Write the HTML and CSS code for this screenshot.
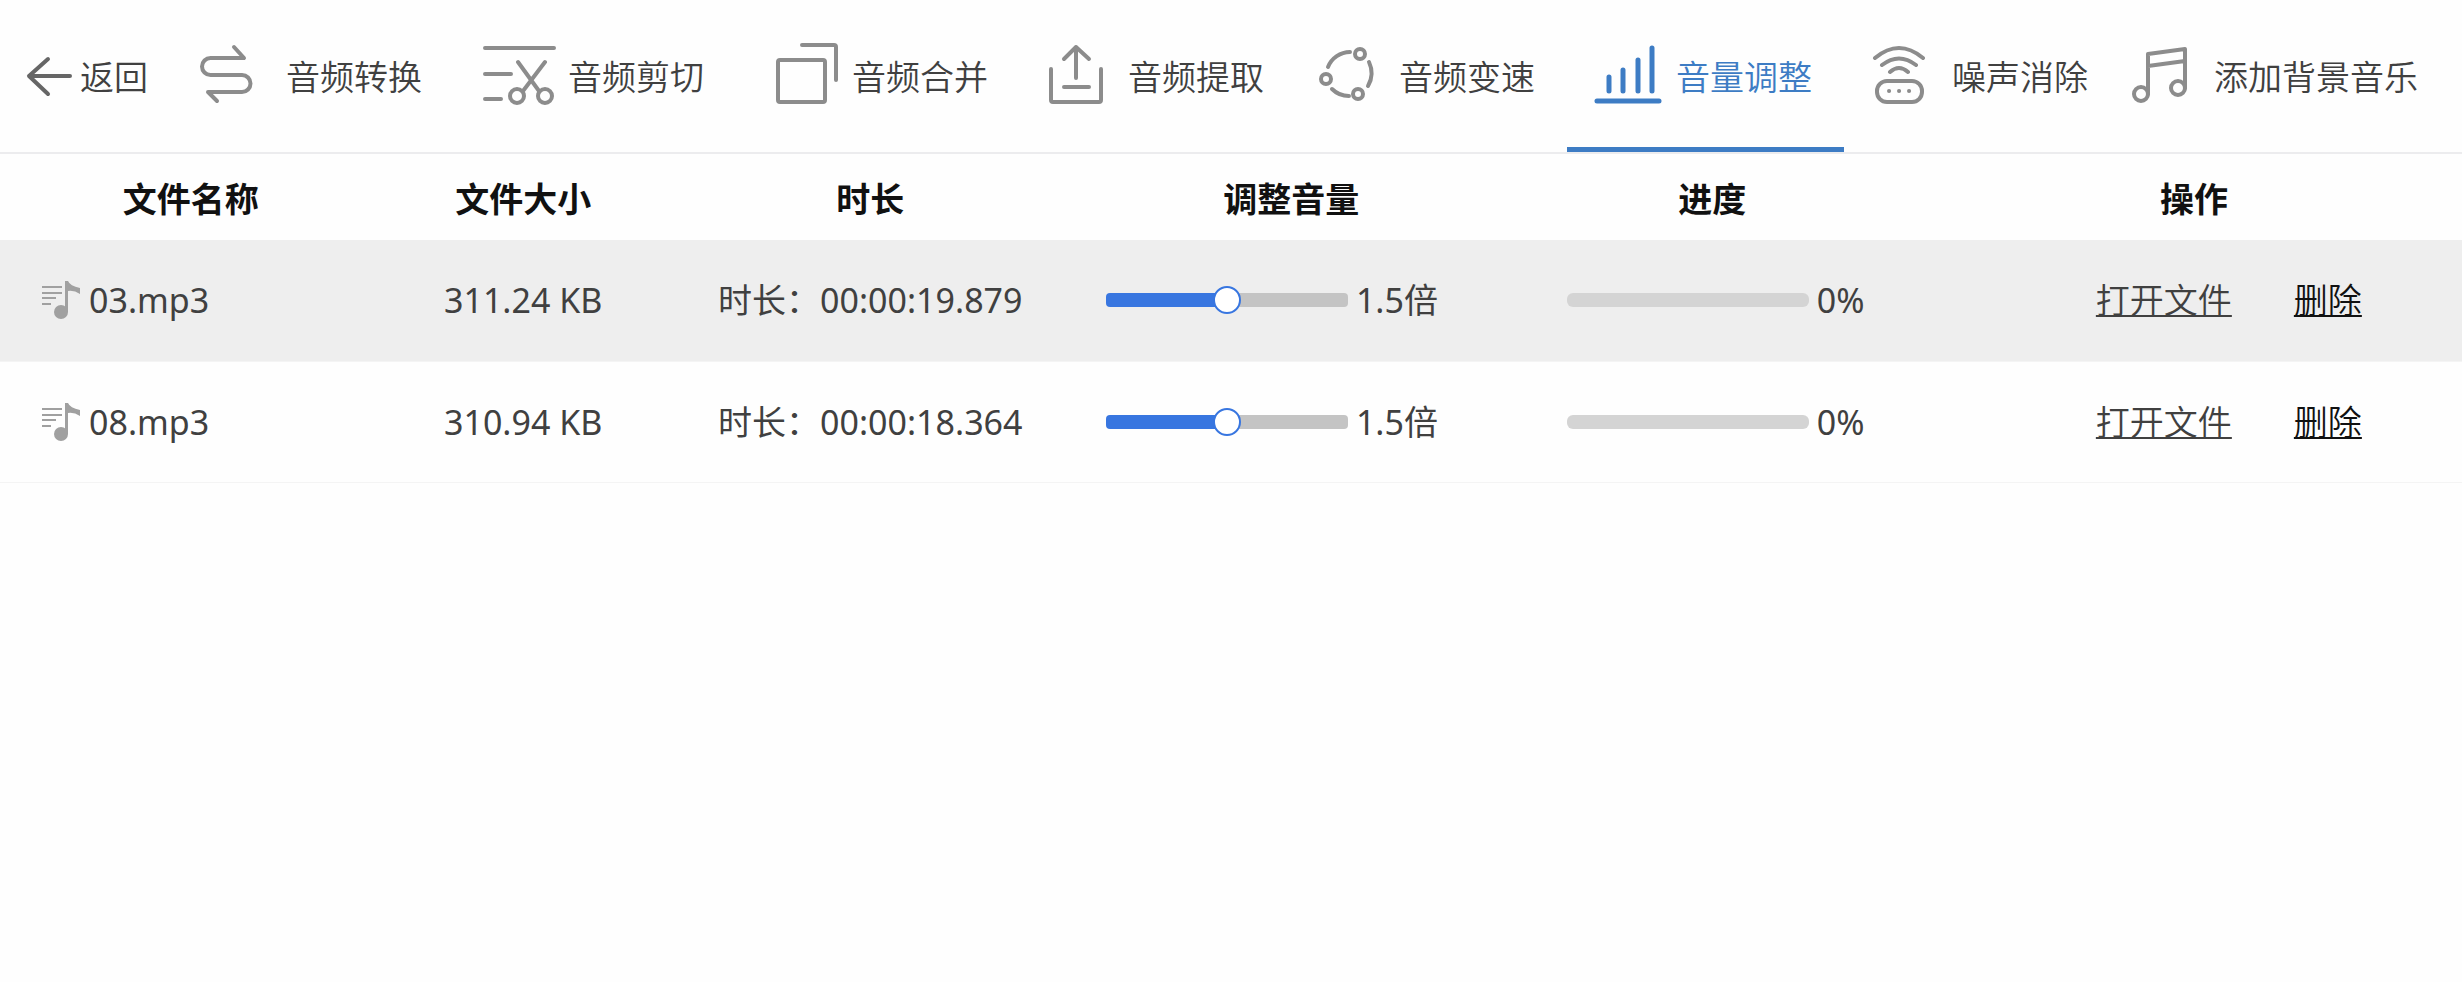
FILE: index.html
```html
<!DOCTYPE html>
<html lang="zh-CN">
<head>
  <meta charset="UTF-8">
  <meta name="viewport" content="width=device-width, initial-scale=1.0">
  <title>音量调整</title>
  <link rel="stylesheet" href="styles.css">
</head>
<body>
  <!-- Toolbar -->
  <nav class="toolbar">
    <a href="#" class="back">
      <svg class="icon" width="56" height="72" viewBox="0 0 56 72">
        <path d="M5 36H46M24 19L5 36L24 54"/>
      </svg>
      返回
    </a>
    <a href="#" class="tab">
      <svg class="icon" width="98" height="72" viewBox="-8 0 98 72">
        <path d="M38 7L48 18H14.500a8.500 8.500 0 0 0 0 17H46a8.500 8.500 0 0 1 0 17H12L21 61"/>
      </svg>
      音频转换
    </a>
    <a href="#" class="tab">
      <svg class="icon" width="106" height="72" viewBox="-8 0 106 72">
        <path d="M15 8H84M15 34H41M15 59H31M48 22L69 51M75 22L53 51"/>
        <circle cx="47" cy="56" r="7"/>
        <circle cx="75" cy="56" r="7"/>
      </svg>
      音频剪切
    </a>
    <a href="#" class="tab">
      <svg class="icon" width="108" height="72" viewBox="-8 0 108 72">
        <rect x="26" y="20" width="47" height="42" rx="2"/>
        <path d="M50 5H82a2 2 0 0 1 2 2V40"/>
      </svg>
      音频合并
    </a>
    <a href="#" class="tab">
      <svg class="icon" width="100" height="72" viewBox="-8 0 100 72">
        <path d="M15 29V60a2 2 0 0 0 2 2H63a2 2 0 0 0 2-2V29M40 38V7M28 19L40 7L53 19M28 47H53"/>
      </svg>
      音频提取
    </a>
    <a href="#" class="tab">
      <svg class="icon" width="95" height="72" viewBox="-8 0 95 72">
        <circle cx="48" cy="14" r="5"/>
        <circle cx="14" cy="39" r="5"/>
        <circle cx="46" cy="54" r="5"/>
        <path d="M16 27A24 24 0 0 1 38 12M20 49A24 24 0 0 0 37 56M57 22A26 26 0 0 1 56 46"/>
      </svg>
      音频变速
    </a>
    <a href="#" class="tab active">
      <svg class="icon" width="101" height="72" viewBox="-8 0 101 72">
        <path d="M26 37V51M40 30V51M55 20V51M69 8V51M14 61H76"/>
      </svg>
      音量调整
    </a>
    <a href="#" class="tab">
      <svg class="icon" width="100" height="72" viewBox="-8 0 100 72">
        <path d="M15 18Q39 -2 63 18M22 25Q39 12 56 25M30 32Q39 24 48 32"/>
        <rect x="17" y="41" width="45" height="21" rx="10"/>
        <path d="M29 51H29.100M39 51H39.100M49 51H49.100"/>
      </svg>
      噪声消除
    </a>
    <a href="#" class="tab">
      <svg class="icon" width="86" height="72" viewBox="-8 0 86 72">
        <circle cx="5" cy="54" r="7"/>
        <circle cx="42" cy="48" r="7"/>
        <path d="M12 54V14L49 9V48M12 26L49 21"/>
      </svg>
      添加背景音乐
    </a>
  </nav>

  <!-- File list -->
  <table class="files">
    <thead>
      <tr>
        <th class="col-name">文件名称</th>
        <th class="col-size">文件大小</th>
        <th class="col-duration">时长</th>
        <th class="col-volume">调整音量</th>
        <th class="col-progress">进度</th>
        <th class="col-actions">操作</th>
      </tr>
    </thead>
    <tbody>
      <tr class="selected">
        <td>
          <div class="cell name">
            <svg class="note" width="40" height="40" viewBox="0 0 40 40">
              <path d="M1 7H21M1 13H21M1 18H15M1 24H10"/>
              <circle cx="20" cy="32" r="7"/>
              <path class="flag" d="M24 1H27Q29 6 39 8V14Q33 10 27 11V32H24Z"/>
            </svg>
            03.mp3
          </div>
        </td>
        <td>311.24 KB</td>
        <td>时长：00:00:19.879</td>
        <td>
          <div class="cell volume">
            <input type="range" id="volume-1" min="0" max="3" step="0.1" value="1.5" style="--fill: 50%">
            <label for="volume-1">1.5倍</label>
          </div>
        </td>
        <td>
          <div class="cell progress">
            <progress id="progress-1" max="100" value="0"></progress>
            <label for="progress-1">0%</label>
          </div>
        </td>
        <td>
          <div class="cell actions">
            <a href="#">打开文件</a>
            <a href="#" class="delete">删除</a>
          </div>
        </td>
      </tr>
      <tr>
        <td>
          <div class="cell name">
            <svg class="note" width="40" height="40" viewBox="0 0 40 40">
              <path d="M1 7H21M1 13H21M1 18H15M1 24H10"/>
              <circle cx="20" cy="32" r="7"/>
              <path class="flag" d="M24 1H27Q29 6 39 8V14Q33 10 27 11V32H24Z"/>
            </svg>
            08.mp3
          </div>
        </td>
        <td>310.94 KB</td>
        <td>时长：00:00:18.364</td>
        <td>
          <div class="cell volume">
            <input type="range" id="volume-2" min="0" max="3" step="0.1" value="1.5" style="--fill: 50%">
            <label for="volume-2">1.5倍</label>
          </div>
        </td>
        <td>
          <div class="cell progress">
            <progress id="progress-2" max="100" value="0"></progress>
            <label for="progress-2">0%</label>
          </div>
        </td>
        <td>
          <div class="cell actions">
            <a href="#">打开文件</a>
            <a href="#" class="delete">删除</a>
          </div>
        </td>
      </tr>
    </tbody>
  </table>

  <script>
    // Keep the label and the filled part in step with the slider
    document.querySelectorAll('.volume input').forEach(function(slider) {
      slider.addEventListener('input', function() {
        slider.style.setProperty('--fill', (slider.value / slider.max * 100) + '%');
        slider.nextElementSibling.textContent = slider.value + '倍';
      });
    });
  </script>
</body>
</html>
```
FILE: styles.css
```css
:root {
  --blue: #3d7cc4;
  --slider-blue: #3876e0;
  --text: #404040;
  --icon: #8c8c8c;
  --line: #ececee;
}

* {
  box-sizing: border-box;
}

body {
  font-family: 'Noto Sans', 'Noto Sans CJK SC', sans-serif;
  font-size: 34px;
  line-height: 48px;
  color: var(--text);
  background-color: #fefefe;
  margin: 0;
}

/* Toolbar */
.toolbar {
  display: flex;
  height: 154px;
  border-bottom: 2px solid var(--line);
  font-family: 'Noto Sans CJK SC', sans-serif;
  font-weight: 350;
  white-space: nowrap;
}

.back,
.tab {
  display: flex;
  flex-shrink: 0;
  align-items: center;
  color: var(--text);
  text-decoration: none;
}

.back {
  padding: 0 32px 0 24px;
}

.tab {
  padding: 0 32px 0 8px;
}

.tab.active {
  color: var(--blue);
  border-bottom: 5px solid var(--blue);
  padding-top: 5px;
}

.icon {
  fill: none;
  stroke: var(--icon);
  stroke-width: 4;
  stroke-linecap: round;
  stroke-linejoin: round;
}

.back .icon {
  stroke: #666;
}

.active .icon {
  stroke: var(--blue);
  stroke-width: 5;
}

/* File list */
.files {
  width: 100%;
  table-layout: fixed;
  border-collapse: collapse;
}

.files th {
  height: 86px;
  padding: 4px 0 0;
  color: #111;
  font-weight: 700;
}

.files td {
  height: 121px;
  padding: 0;
  text-align: center;
}

.files tbody tr {
  border-bottom: 1px solid #f4f4f4;
}

.files .selected {
  background-color: #eee;
}

.col-name { width: 15.5%; }
.col-size { width: 11.5%; }
.col-duration { width: 16.7%; }
.col-volume { width: 17.5%; }
.col-progress { width: 16.7%; }

.files .col-actions {
  padding-left: 8px;
}

.cell {
  display: flex;
  align-items: center;
  gap: 8px;
}

.name { padding-left: 41px; }
.volume { padding-left: 30px; }
.progress { padding-left: 60px; }

.actions {
  gap: 62px;
  padding-left: 178px;
  font-weight: 350;
}

.actions a {
  color: var(--text);
  text-underline-offset: 2px;
  text-decoration-thickness: 2px;
  text-decoration-skip-ink: none;
}

.actions .delete {
  color: #111;
}

.note {
  fill: #a0a0a0;
  stroke: #a0a0a0;
  stroke-width: 2;
}

.note circle,
.note .flag {
  stroke: none;
}

input[type="range"] {
  -webkit-appearance: none;
  appearance: none;
  width: 242px;
  height: 14px;
  margin: 0;
  border-radius: 4px;
  background: linear-gradient(to right, var(--slider-blue) var(--fill), #c4c4c4 var(--fill));
}

input[type="range"]::-webkit-slider-thumb {
  -webkit-appearance: none;
  width: 28px;
  height: 28px;
  border: 2px solid var(--slider-blue);
  border-radius: 50%;
  background-color: white;
}

progress {
  -webkit-appearance: none;
  appearance: none;
  width: 242px;
  height: 14px;
  border: none;
  border-radius: 6px;
  overflow: hidden;
}

progress::-webkit-progress-bar {
  background-color: #d4d4d4;
}

progress::-webkit-progress-value {
  background-color: var(--slider-blue);
}
```
